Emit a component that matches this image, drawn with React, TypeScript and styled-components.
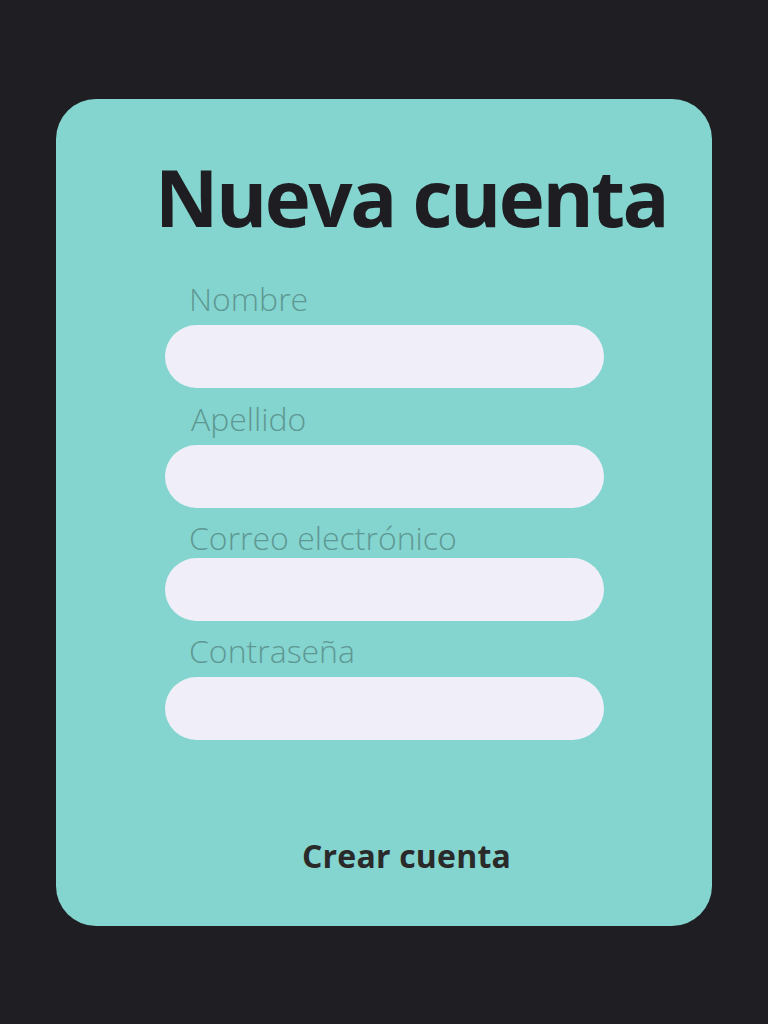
import React from "react";
import styled, { createGlobalStyle } from "styled-components";

const Global = createGlobalStyle`
  html, body { margin: 0; padding: 0; background: #1f1e22; }
  body { font-family: "Open Sans", "Noto Sans", sans-serif; }
  * { box-sizing: border-box; }
`;

const Page = styled.div`
  width: 768px;
  height: 1024px;
  padding: 99px 56px 0 56px;
  background: #1f1e22;
`;

const Card = styled.form`
  width: 656px;
  height: 827px;
  background: #84d5cf;
  border-radius: 40px;
  display: flex;
  flex-direction: column;
  align-items: flex-start;
`;

const Title = styled.h1`
  margin: 48px 0 0 99px;
  font-family: "Open Sans", sans-serif;
  font-weight: 700;
  font-size: 78px;
  line-height: 100px;
  color: #1e1d21;
  letter-spacing: -2.5px;
  white-space: nowrap;
`;

const Label = styled.label<{ $dx: number; $top: number }>`
  display: block;
  margin: ${(p) => p.$top}px 0 0 ${(p) => 133 + p.$dx}px;
  font-family: "Open Sans", sans-serif;
  font-weight: 300;
  font-size: 32px;
  line-height: 40px;
  color: #5f9893;
  white-space: nowrap;
`;

const Input = styled.input<{ $top: number }>`
  display: block;
  margin: ${(p) => p.$top}px 0 0 109px;
  width: 439px;
  height: 63px;
  border: none;
  outline: none;
  border-radius: 32px;
  background: #f0eff9;
  padding: 0 24px;
  font-family: "Open Sans", sans-serif;
  font-size: 20px;
`;

const Button = styled.button`
  margin: 96px 0 0 246px;
  background: none;
  border: none;
  padding: 0;
  font-family: "Open Sans", sans-serif;
  font-weight: 700;
  font-size: 32px;
  line-height: 40px;
  letter-spacing: 0.2px;
  color: #2b2a2a;
  cursor: pointer;
  white-space: nowrap;
`;

const fields = [
  { label: "Nombre", dx: 0, labelTop: 32, inputTop: 6, type: "text" },
  { label: "Apellido", dx: 2, labelTop: 11, inputTop: 6, type: "text" },
  { label: "Correo electrónico", dx: 0, labelTop: 10, inputTop: 0, type: "email" },
  { label: "Contraseña", dx: 0, labelTop: 10, inputTop: 6, type: "password" },
];

export default function App() {
  return (
    <>
      <Global />
      <Page>
        <Card onSubmit={(e) => e.preventDefault()}>
          <Title>Nueva cuenta</Title>
          {fields.map((f) => (
            <React.Fragment key={f.label}>
              <Label $dx={f.dx} $top={f.labelTop}>{f.label}</Label>
              <Input $top={f.inputTop} type={f.type} />
            </React.Fragment>
          ))}
          <Button type="submit">Crear cuenta</Button>
        </Card>
      </Page>
    </>
  );
}
